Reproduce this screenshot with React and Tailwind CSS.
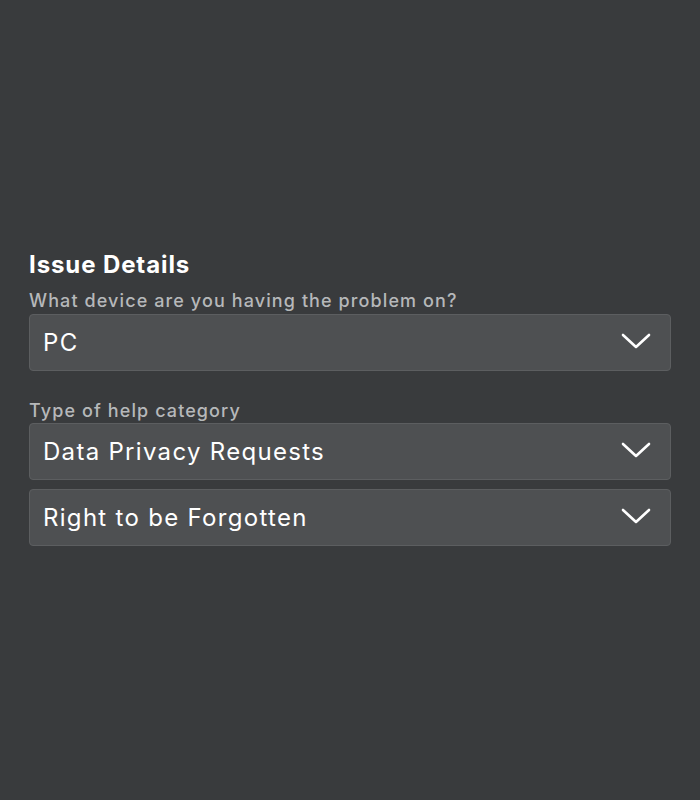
import React from "react";

function Chevron() {
  return (
    <svg width="30" height="16" viewBox="0 0 30 16" fill="none" className="shrink-0 mb-[3px]">
      <path d="M2 2 L15 14 L28 2" stroke="#ffffff" strokeWidth="2.6" strokeLinecap="round" strokeLinejoin="round" />
    </svg>
  );
}

function Select({ value }) {
  return (
    <div className="h-[57px] w-full rounded-[4px] border border-[#5c5e60] bg-[#4e5052] flex items-center justify-between pl-[13px] pr-[19px]">
      <span className="text-[24px] text-white leading-none tracking-[1.3px]">{value}</span>
      <Chevron />
    </div>
  );
}

export default function App() {
  return (
    <div className="min-h-[800px] w-full bg-[#393b3d] px-[29px] pt-[250px]" style={{ fontFamily: "Inter, 'Noto Sans', sans-serif" }}>
      <h2 className="text-[24px] font-bold text-white leading-[30px] tracking-[0.9px]">Issue Details</h2>
      <div className="mt-[10px] text-[18px] font-medium text-[#b6b8ba] leading-[22px] tracking-[1.1px]">What device are you having the problem on?</div>
      <div className="mt-[2px]"><Select value="PC" /></div>
      <div className="mt-[29px] text-[18px] font-medium text-[#b6b8ba] leading-[22px] tracking-[1.1px]">Type of help category</div>
      <div className="mt-[1px] flex flex-col gap-[9px]">
        <Select value="Data Privacy Requests" />
        <Select value="Right to be Forgotten" />
      </div>
    </div>
  );
}
